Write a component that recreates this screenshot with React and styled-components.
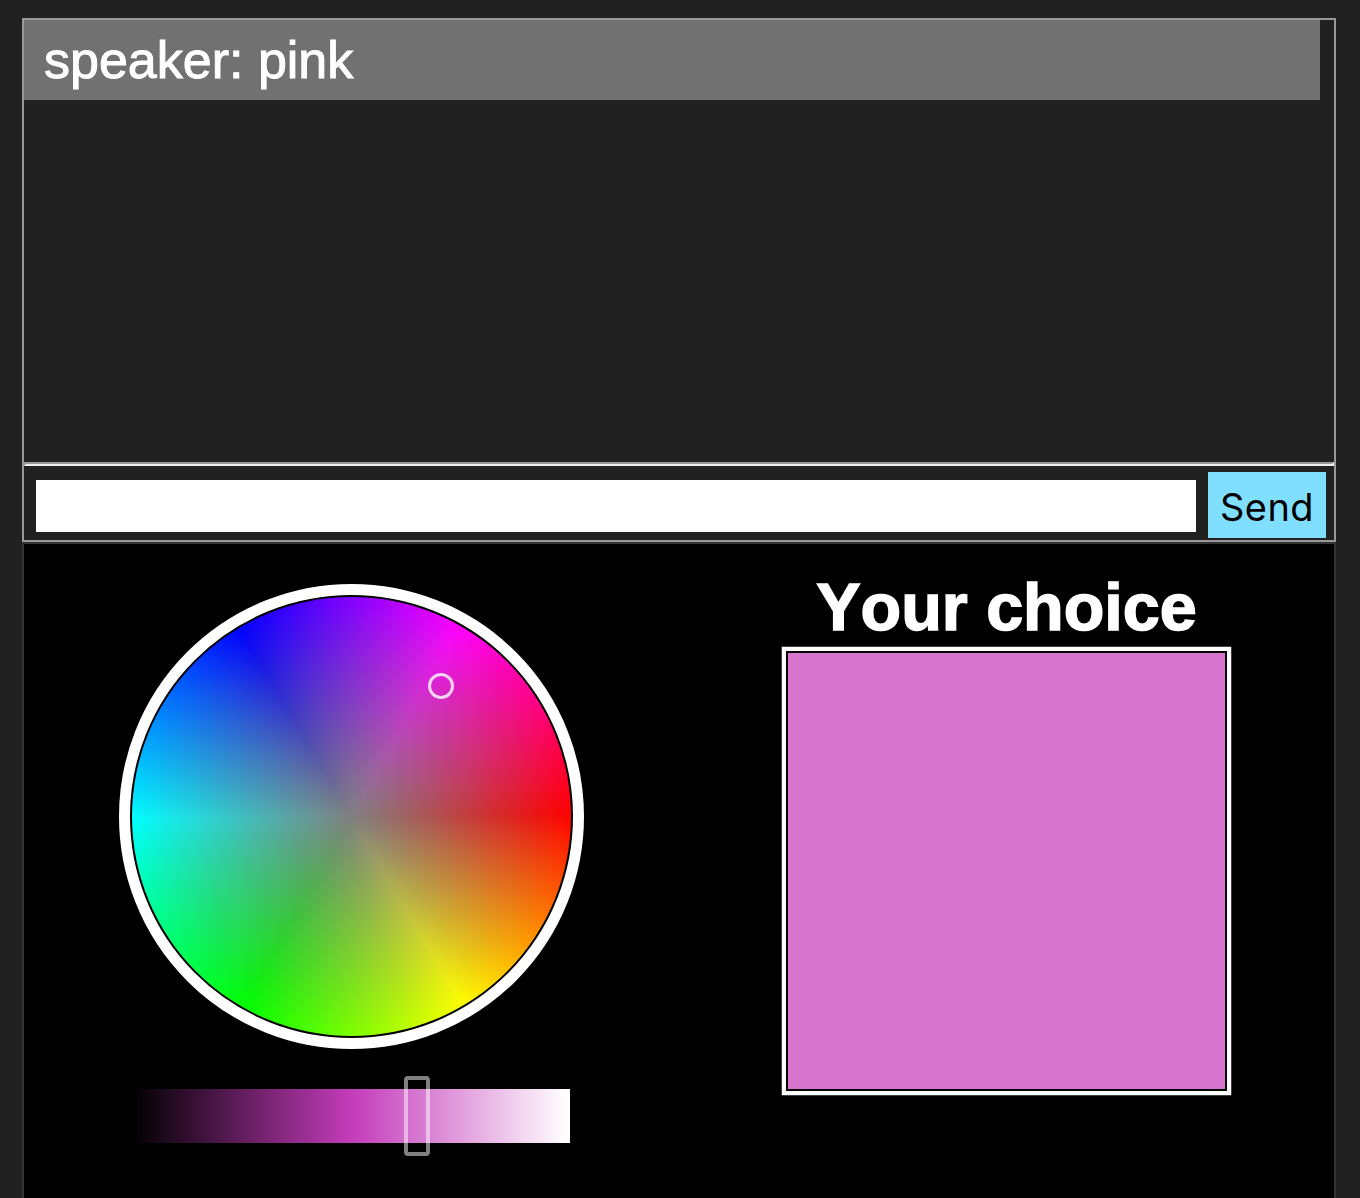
import React from "react";
import styled, { createGlobalStyle } from "styled-components";

const GlobalStyle = createGlobalStyle`
  * { box-sizing: border-box; }
  body {
    margin: 0;
    background: #212121;
    font-family: "Liberation Sans", Arial, Helvetica, sans-serif;
    overflow: hidden;
  }
`;

const Page = styled.main`
  height: 1198px;
  padding: 18px 24px 0 22px;
  overflow: hidden;
`;

const Chat = styled.section`
  height: 524px;
  border: 2px solid #999;
  display: flex;
  flex-direction: column;
`;

const Messages = styled.div`
  flex: 1;
  padding-right: 14px;
`;

const Message = styled.div`
  height: 80px;
  padding-left: 20px;
  background: #717171;
  color: #fff;
  font-size: 52px;
  line-height: 80px;
  font-kerning: none;
  -webkit-text-stroke: 1px #fff;
`;

const Divider = styled.hr`
  width: 100%;
  height: 4px;
  margin: 0;
  border: 2px solid;
  border-color: #999 #eee #eee #999;
`;

const Composer = styled.form`
  display: flex;
  align-items: center;
  height: 74px;
  gap: 12px;
  padding: 4px 8px 0 12px;
`;

const TextField = styled.input`
  flex: 1;
  min-width: 0;
  height: 52px;
  margin-top: 2px;
  border: 0;
  padding: 0 8px;
  background: #fff;
  font-size: 36px;
  outline: none;
`;

const SendButton = styled.button`
  width: 118px;
  height: 66px;
  border: 0;
  padding: 3px 0 0;
  background: #80dfff;
  color: #000;
  font-family: Inter, Roboto, sans-serif;
  font-size: 38px;
  line-height: 60px;
  letter-spacing: 0.4px;
`;

const Picker = styled.section`
  display: flex;
  height: 700px;
  border: 2px solid #333;
  background: #000;
`;

const Controls = styled.div`
  width: 655px;
  padding: 40px 0 0 94.5px;
`;

const Ring = styled.div`
  width: 465px;
  height: 465px;
  padding: 2px;
  border: 11px solid #fff;
  border-radius: 50%;
`;

const Wheel = styled.div`
  position: relative;
  width: 100%;
  height: 100%;
  border-radius: 50%;
  background:
    radial-gradient(circle closest-side, #808080, rgba(128, 128, 128, 0)),
    conic-gradient(from 89.2deg, #f00, #ff0, #0f0, #0ff, #00f, #f0f, #f00);
`;

const HueMarker = styled.span`
  position: absolute;
  left: 296px;
  top: 76px;
  width: 26px;
  height: 26px;
  border: 3px solid rgba(255, 255, 255, 0.8);
  border-radius: 50%;
`;

const LightnessBar = styled.div`
  position: relative;
  width: 438px;
  height: 54px;
  margin: 40px 0 0 13.5px;
  background: linear-gradient(90deg, #000 0%, #c33bba 50%, #fff 99.5%);
`;

const LightnessMarker = styled.span`
  position: absolute;
  left: 272px;
  top: -13px;
  width: 26px;
  height: 80px;
  border: 4px solid rgba(255, 255, 255, 0.5);
  border-radius: 4px;
`;

const Choice = styled.div`
  flex: 1;
  display: flex;
  flex-direction: column;
  align-items: center;
  padding-top: 24px;
`;

const Title = styled.h2`
  margin: 0;
  height: 79px;
  color: #fff;
  font-size: 66.5px;
  line-height: 79px;
  white-space: nowrap;
  font-kerning: none;
  -webkit-text-stroke: 1.5px #fff;
`;

const Swatch = styled.div`
  width: 449px;
  height: 448px;
  padding: 2px;
  border: 4px solid #fff;
  box-shadow: 0 0 0 0.5px rgba(255, 255, 255, 0.5);
  background: #d674ce content-box;
`;

export default function App() {
  return (
    <>
      <GlobalStyle />
      <Page>
        <Chat>
          <Messages>
            <Message>speaker: pink</Message>
          </Messages>
          <Divider />
          <Composer onSubmit={(e) => e.preventDefault()}>
            <TextField type="text" />
            <SendButton type="submit">Send</SendButton>
          </Composer>
        </Chat>
        <Picker>
          <Controls>
            <Ring>
              <Wheel>
                <HueMarker />
              </Wheel>
            </Ring>
            <LightnessBar>
              <LightnessMarker />
            </LightnessBar>
          </Controls>
          <Choice>
            <Title>Your choice</Title>
            <Swatch />
          </Choice>
        </Picker>
      </Page>
    </>
  );
}
